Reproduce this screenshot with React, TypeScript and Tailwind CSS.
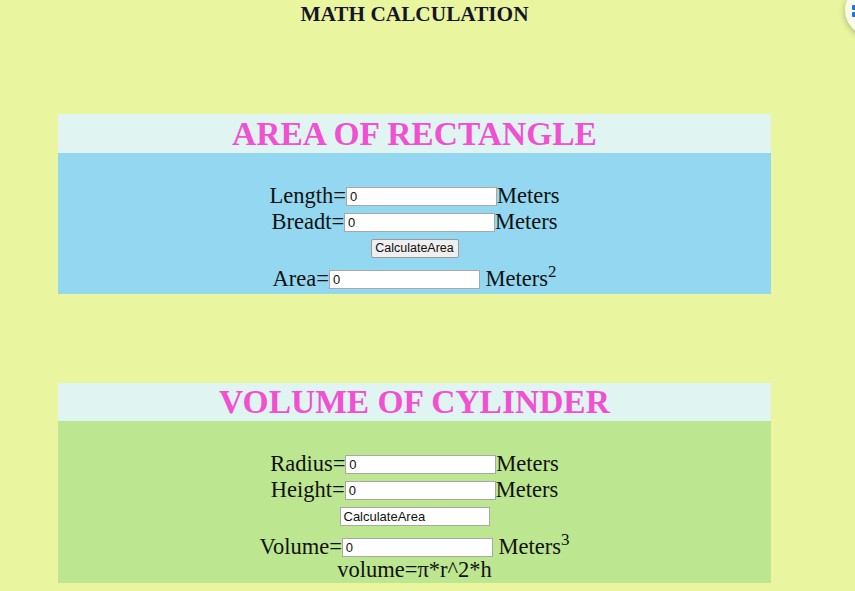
import React from "react";

const serif = "font-['Liberation_Serif','Times_New_Roman',serif]";
const sans = "font-['Liberation_Sans',Arial,sans-serif]";

function Field({ value = "0", width = "w-[151px]" }: { value?: string; width?: string }) {
  return (
    <div
      className={`${width} h-[19px] bg-white border border-[#a8a8a8] ${sans} text-[13px] leading-[17px] text-[#111] pl-[3px] flex items-center shrink-0`}
    >
      {value}
    </div>
  );
}

function Row({ label, unit, sup, h = "h-[26px]" }: { label: string; unit: string; sup?: string; h?: string }) {
  return (
    <div className={`flex items-center justify-center ${h}`}>
      <span className="leading-[26px]">{label}</span>
      <Field />
      <span className="leading-[26px] whitespace-pre">
        {sup ? " " : ""}
        {unit}
        {sup && <sup className="text-[17px] relative top-[-9px]">{sup}</sup>}
      </span>
    </div>
  );
}

export default function App() {
  return (
    <div className={`relative w-[855px] h-[591px] bg-[#e9f59f] overflow-hidden ${serif} text-[#111]`}>
      <div className="w-[829px]">
        <div className="pt-[2px] h-[26px] text-center text-[21.3px] leading-[24px] font-bold text-[#15152a]">
          MATH CALCULATION
        </div>

        <div className="mx-[58px] mt-[88px]">
          <div className="h-[39px] bg-[#e0f4f2] text-center text-[33.5px] leading-[39px] font-bold text-[#f050d2]">
            AREA OF RECTANGLE
          </div>
          <div className="bg-[#93d7f0] pt-[30px] pb-[2px] text-[22.5px]">
            <Row label="Length=" unit="Meters" />
            <Row label="Breadt=" unit="Meters" />
            <div className="flex justify-center mt-[4px]">
              <div
                className={`h-[19px] w-[88px] bg-[#efefef] border border-[#9a9a9a] rounded-[2px] ${sans} text-[12.5px] leading-[17px] text-[#111] flex items-center justify-center`}
              >
                CalculateArea
              </div>
            </div>
            <div className="mt-[8px]">
              <Row label="Area=" unit="Meters" sup="2" />
            </div>
          </div>
        </div>

        <div className="mx-[58px] mt-[89px]">
          <div className="h-[38px] bg-[#e0f4f2] text-center text-[33.5px] leading-[38px] font-bold text-[#f050d2]">
            VOLUME OF CYLINDER
          </div>
          <div className="bg-[#bce68f] pt-[30px] pb-[1px] text-[22.5px]">
            <Row label="Radius=" unit="Meters" />
            <Row label="Height=" unit="Meters" />
            <div className="flex justify-center mt-[4px]">
              <Field value="CalculateArea" width="w-[150px]" />
            </div>
            <div className="mt-[9px]">
              <Row label="Volume=" unit="Meters" sup="3" h="h-[24px]" />
            </div>
            <div className="text-center leading-[22px] pb-[1px]">volume=π*r^2*h</div>
          </div>
        </div>
      </div>

      <div className="absolute left-[845px] top-[-16px] w-[52px] h-[52px] rounded-full bg-[#f8fbe6] shadow-[0_2px_6px_rgba(0,0,0,0.25)]">
        <div className="absolute left-[7px] top-[21px] w-[6px] h-[5px] bg-[#1a73e8] rounded-[1px]" />
        <div className="absolute left-[7px] top-[28px] w-[6px] h-[5px] bg-[#1a73e8] rounded-[1px]" />
      </div>
    </div>
  );
}
